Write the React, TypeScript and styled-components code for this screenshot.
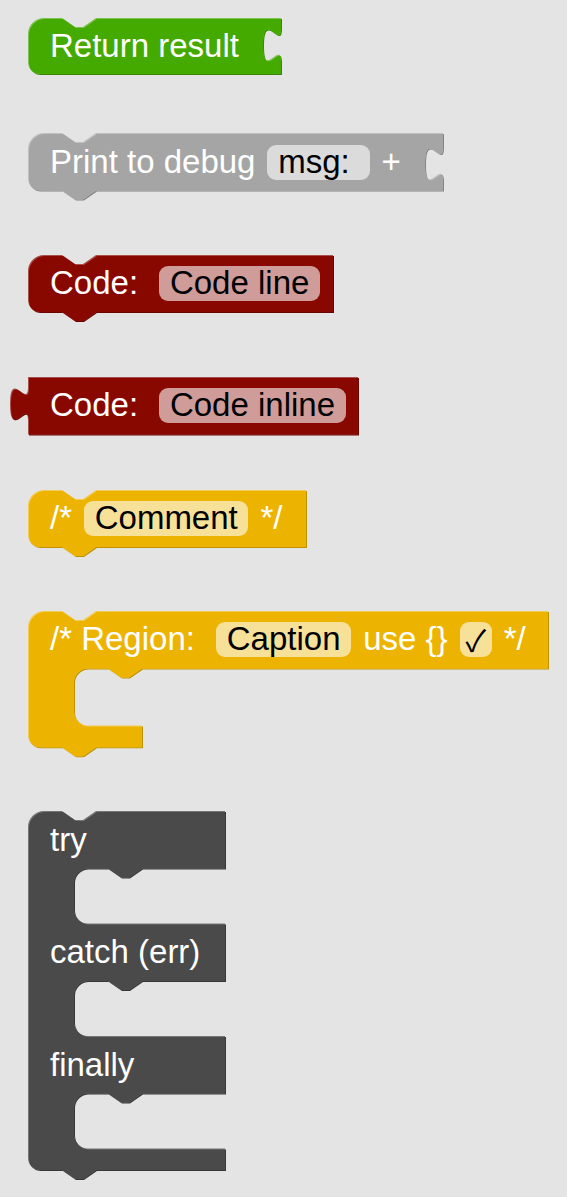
import React, { useId } from 'react'
import styled, { createGlobalStyle } from 'styled-components'

const GlobalStyle = createGlobalStyle`
  html, body {
    margin: 0;
    padding: 0;
    background: #e4e4e4;
  }
  body {
    font-family: "Liberation Sans", Arial, sans-serif;
  }
`;

// block geometry (geras-like, scaled ~2.25)
const R = 16;
const BR = 12;
const IR = 14;
const NO = 34;
const NS = 13;
const NF = 8;
const NH = 9;
const NW = NS * 2 + NF;
const TH = 33.75;
const SPINE = 46;

const notchRight = `l ${NS} ${NH} h ${NF} l ${NS} ${-NH}`;
const notchLeft = `l ${-NS} ${NH} h ${-NF} l ${-NS} ${-NH}`;
const tabDown = 'c 0 22.5 -18 -19.125 -18 16.875 s 18 -5.625 18 16.875';
const tabUp = 'c 0 -22.5 -18 19.125 -18 -16.875 s 18 5.625 18 -16.875';

type Section =
  | { kind: 'head'; h: number; w: number; tab?: number; content: React.ReactNode }
  | { kind: 'mouth'; h: number };

type Spec = {
  color: string;
  light: string;
  dark: string;
  top: number;
  output?: number;
  next?: boolean;
  sections: Section[];
  foot?: { h: number; w: number };
};

function outline(spec: Spec) {
  let d = spec.output != null ? 'M 0 0' : `M 0 ${R} a ${R} ${R} 0 0 1 ${R} ${-R} H ${NO} ${notchRight}`;
  let y = 0;
  for (const s of spec.sections) {
    if (s.kind === 'head') {
      d += ` H ${s.w}`;
      if (s.tab != null) d += ` V ${y + s.tab} ${tabDown}`;
      y += s.h;
      d += ` V ${y}`;
    } else {
      d += ` H ${SPINE + NO + NW} ${notchLeft} H ${SPINE + IR}`;
      d += ` a ${IR} ${IR} 0 0 0 ${-IR} ${IR} V ${y + s.h - IR} a ${IR} ${IR} 0 0 0 ${IR} ${IR}`;
      y += s.h;
    }
  }
  if (spec.foot) {
    d += ` H ${spec.foot.w}`;
    y += spec.foot.h;
    d += ` V ${y}`;
  }
  if (spec.next) d += ` H ${NO + NW} ${notchLeft}`;
  if (spec.output != null) {
    d += ` H 0 V ${spec.output + TH} ${tabUp} Z`;
  } else {
    d += ` H ${BR} a ${BR} ${BR} 0 0 1 ${-BR} ${-BR} Z`;
  }
  return d;
}

const Workspace = styled.div`
  display: flex;
  flex-direction: column;
  align-items: flex-start;
  padding: 18px 0 0 28px;
  min-height: 100vh;
  box-sizing: border-box;
`;

const BlockBox = styled.div<{ $w: number; $h: number; $top: number }>`
  position: relative;
  width: ${p => p.$w}px;
  height: ${p => p.$h}px;
  margin-top: ${p => p.$top}px;
`;

const Shape = styled.svg`
  position: absolute;
  left: 0;
  top: 0;
  overflow: visible;
`;

const Body = styled.div`
  position: relative;
  display: flex;
  flex-direction: column;
`;

const Row = styled.div<{ $h: number }>`
  display: flex;
  align-items: center;
  gap: 12px;
  height: ${p => p.$h}px;
  padding-left: 22px;
  color: #fff;
  font-size: 33px;
  white-space: pre;
`;

const Mouth = styled.div<{ $h: number }>`
  height: ${p => p.$h}px;
`;

const Field = styled.span`
  display: inline-flex;
  align-items: center;
  height: 35px;
  padding: 0 10.7px;
  border-radius: 9px;
  background: rgba(255, 255, 255, 0.6);
  color: #000;
`;

const Check = styled(Field)`
  width: 32px;
  padding: 0;
  justify-content: center;
  font-family: "Noto Sans CJK JP", "DejaVu Sans", sans-serif;
  font-size: 30px;
`;

function Block({ spec }: { spec: Spec }) {
  const id = 'b' + useId().replace(/[^a-zA-Z0-9]/g, '');
  const d = outline(spec);
  const w = Math.max(...spec.sections.map(s => (s.kind === 'head' ? s.w : 0)), spec.foot?.w ?? 0);
  const h = spec.sections.reduce((a, s) => a + s.h, 0) + (spec.foot?.h ?? 0);
  return (
    <BlockBox $w={w} $h={h} $top={spec.top}>
      <Shape width={w} height={h}>
        <defs>
          <clipPath id={id}>
            <path d={d} />
          </clipPath>
        </defs>
        <path d={d} fill={spec.dark} transform="translate(1,1)" />
        <path d={d} fill={spec.light} />
        <g clipPath={`url(#${id})`}>
          <path d={d} fill={spec.color} transform="translate(1,1)" />
        </g>
      </Shape>
      <Body>
        {spec.sections.map((s, i) =>
          s.kind === 'head' ? (
            <Row key={i} $h={s.h}>{s.content}</Row>
          ) : (
            <Mouth key={i} $h={s.h} />
          )
        )}
      </Body>
    </BlockBox>
  );
}

const green = { color: '#44aa00', light: '#7cc24d', dark: '#368800' };
const grey = { color: '#a5a5a5', light: '#c0c0c0', dark: '#848484' };
const red = { color: '#880800', light: '#a84f4a', dark: '#6a0500' };
const yellow = { color: '#ecb400', light: '#f3cc55', dark: '#c09200' };
const slate = { color: '#4a4a4a', light: '#767676', dark: '#383838' };

const blocks: Spec[] = [
  {
    ...green,
    top: 0,
    sections: [{ kind: 'head', h: 56, w: 253, tab: 10, content: <span>Return result</span> }],
  },
  {
    ...grey,
    top: 59.3,
    next: true,
    sections: [
      {
        kind: 'head',
        h: 57.5,
        w: 415,
        tab: 14,
        content: (
          <>
            <span>Print to debug</span>
            <Field>{'msg:\u00a0'}</Field>
            <span>+</span>
          </>
        ),
      },
    ],
  },
  {
    ...red,
    top: 64.2,
    next: true,
    sections: [
      {
        kind: 'head',
        h: 57,
        w: 305,
        content: (
          <>
            <span>{'Code:\u00a0'}</span>
            <Field>Code line</Field>
          </>
        ),
      },
    ],
  },
  {
    ...red,
    top: 64.7,
    output: 10,
    sections: [
      {
        kind: 'head',
        h: 57.5,
        w: 330,
        content: (
          <>
            <span>{'Code:\u00a0'}</span>
            <Field>Code inline</Field>
          </>
        ),
      },
    ],
  },
  {
    ...yellow,
    top: 55.5,
    next: true,
    sections: [
      {
        kind: 'head',
        h: 57,
        w: 278,
        content: (
          <>
            <span>/*</span>
            <Field>Comment</Field>
            <span>*/</span>
          </>
        ),
      },
    ],
  },
  {
    ...yellow,
    top: 64,
    next: true,
    sections: [
      {
        kind: 'head',
        h: 57.5,
        w: 520,
        content: (
          <>
            <span>{'/* Region:\u00a0'}</span>
            <Field>Caption</Field>
            <span>use {'{}'}</span>
            <Check>✓</Check>
            <span>*/</span>
          </>
        ),
      },
      { kind: 'mouth', h: 57 },
    ],
    foot: { h: 21.7, w: 114 },
  },
  {
    ...slate,
    top: 64.3,
    next: true,
    sections: [
      { kind: 'head', h: 57.5, w: 197, content: <span>try</span> },
      { kind: 'mouth', h: 55 },
      { kind: 'head', h: 57.5, w: 197, content: <span>catch (err)</span> },
      { kind: 'mouth', h: 55 },
      { kind: 'head', h: 57.5, w: 197, content: <span>finally</span> },
      { kind: 'mouth', h: 55 },
    ],
    foot: { h: 21.5, w: 197 },
  },
];

export default function App() {
  return (
    <>
      <GlobalStyle />
      <Workspace>
        {blocks.map((b, i) => (
          <Block key={i} spec={b} />
        ))}
      </Workspace>
    </>
  );
}
